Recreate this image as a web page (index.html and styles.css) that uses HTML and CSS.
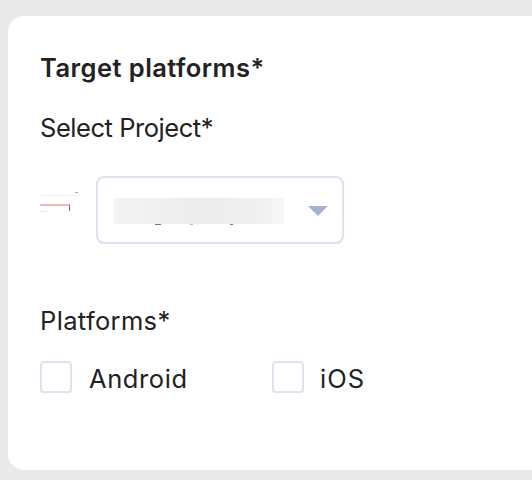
FILE: index.html
```html
<!DOCTYPE html>
<html lang="en">
<head>
<meta charset="utf-8">
<title>Target platforms</title>
<link rel="stylesheet" href="styles.css">
</head>
<body>
<main class="card">
  <h2 class="title">Target platforms*</h2>
  <div class="label project-label">Select Project*</div>
  <div class="project-row">
    <div class="thumb">
      <div class="thumb-dots"></div>
      <div class="thumb-line"></div>
      <div class="thumb-bar"></div>
      <div class="thumb-note"></div>
    </div>
    <div class="select">
      <div class="blur-value">
        <span class="speck speck-a"></span>
        <span class="speck speck-b"></span>
        <span class="speck speck-c"></span>
      </div>
      <svg class="caret" width="20" height="10" viewBox="0 0 20 10"><path d="M0 0H20L10 10Z" fill="#a3b4d3"/></svg>
    </div>
  </div>
  <div class="label platforms-label">Platforms*</div>
  <div class="options">
    <label class="option option-android"><span class="box"></span><span class="option-text">Android</span></label>
    <label class="option option-ios"><span class="box"></span><span class="option-text">iOS</span></label>
  </div>
</main>
</body>
</html>
```
FILE: styles.css
```css
* { box-sizing: border-box; }
html, body { margin: 0; height: 480px; overflow: hidden; }
body {
  background: #e9e9e9;
  padding: 16px 0 10px 8px;
  font-family: Inter, "Liberation Sans", sans-serif;
  color: #222;
}
.card {
  width: 540px;
  height: 454px;
  background: #fff;
  border-radius: 16px;
  padding: 35px 0 0 32px;
}
.title {
  margin: 0;
  font-size: 25.5px;
  line-height: 34px;
  font-weight: 600;
  letter-spacing: 0.45px;
}
.label {
  font-size: 25.5px;
  line-height: 34px;
}
.project-label { margin-top: 26px; letter-spacing: -0.45px; }
.project-row {
  display: flex;
  align-items: center;
  gap: 16px;
  margin-top: 31px;
}
.thumb {
  width: 40px;
  height: 36px;
  display: flex;
  flex-direction: column;
  align-items: flex-start;
}
.thumb-dots {
  width: 3px;
  height: 1px;
  margin-left: 35px;
  background: #aaa;
}
.thumb-line {
  width: 40px;
  height: 1px;
  margin-top: 2px;
  background: #f0f0f0;
}
.thumb-bar {
  width: 30px;
  height: 7px;
  margin-top: 8px;
  border-top: 2px solid #eebcb6;
  border-right: 1px solid #b5483c;
}
.thumb-note {
  width: 7px;
  height: 1px;
  background: #e4e4e4;
}
.select {
  width: 248px;
  height: 68px;
  border: 2px solid #dce2f0;
  border-radius: 8px;
  display: flex;
  align-items: center;
  justify-content: space-between;
  padding: 0 14px 0 16px;
}
.blur-value {
  position: relative;
  width: 170px;
  height: 26px;
  margin-top: 2px;
  background: linear-gradient(90deg, #f4f4f4, #ececec 50%, #f0f0f0 85%, #f8f8f8);
}
.speck {
  position: absolute;
  top: 100%;
  height: 1px;
  background: #777;
}
.speck-a { left: 41px; width: 6px; }
.speck-b { left: 76px; width: 3px; background: #bbb; }
.speck-c { left: 116px; width: 3px; }
.caret { margin-top: 2px; }
.platforms-label { margin-top: 60px; letter-spacing: 0.35px; }
.options {
  display: flex;
  margin-top: 23px;
}
.option {
  display: flex;
  align-items: flex-start;
  gap: 16px;
  font-size: 25.5px;
  line-height: 32px;
}
.option-text { padding-top: 2px; }
.option-android { width: 232px; gap: 17px; letter-spacing: 0.6px; }
.option-ios { letter-spacing: 1px; }
.box {
  width: 32px;
  height: 32px;
  border: 2px solid #dce2f0;
  border-radius: 4px;
}
```
